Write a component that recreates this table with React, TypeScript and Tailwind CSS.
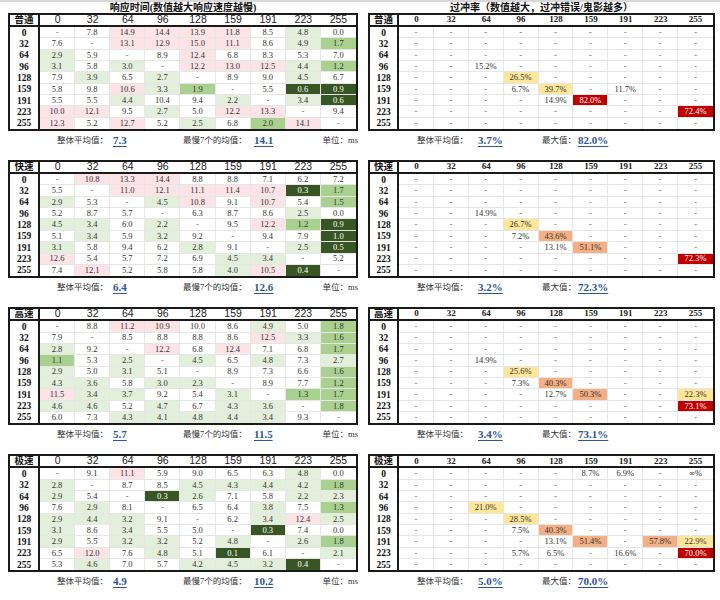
import React from 'react';

const labels = ['0', '32', '64', '96', '128', '159', '191', '223', '255'];
const dash = '- - - - - - - - -';

type Block = {
  name: string;
  title?: boolean;
  left: string[];
  right: string[];
  avg: string;
  slow: string;
  ravg: string;
  rmax: string;
};

const blocks: Block[] = [
  {
    name: '普通',
    title: true,
    left: [
      '- 7.8 14.9p 14.4p 13.9p 11.8p 8.5 4.8a 0.0',
      '7.6 - 13.1p 12.9p 15.0p 11.1p 8.6 4.9a 1.7b',
      '2.9a 5.9 - 8.9 12.4p 6.8 8.3 5.3 7.0',
      '3.1a 5.8 3.0a - 12.2p 13.0p 12.5p 4.4a 1.2b',
      '7.9 3.9a 6.5 2.7a - 8.9 9.0 4.5a 6.7',
      '5.8 9.8 10.6p 3.3a 1.9b - 5.5 0.6c 0.9c',
      '5.5 5.5 4.4a 10.4 9.4 2.2a - 3.4a 0.6c',
      '10.0p 12.1p 9.5 2.7a 5.0 12.2p 13.3p - 9.4',
      '12.3p 5.2 12.7p 5.2 2.5a 6.8 2.0b 14.1p -',
    ],
    right: [
      dash,
      dash,
      dash,
      '- - 15.2% - - - - - -',
      '- - - 26.5%y - - - - -',
      '- - - 6.7% 39.7%y - 11.7% - -',
      '- - - - 14.9% 82.0%r - - -',
      '- - - - - - - - 72.4%r',
      dash,
    ],
    avg: '7.3',
    slow: '14.1',
    ravg: '3.7%',
    rmax: '82.0%',
  },
  {
    name: '快速',
    left: [
      '- 10.8p 13.3p 14.4p 8.8 8.8 7.1 6.2 7.2',
      '5.5 - 11.0p 12.1p 11.1p 11.4p 10.7p 0.3c 1.7b',
      '2.9a 5.3 - 4.5a 10.8p 9.1 10.7p 5.4 1.5b',
      '5.2 8.7 5.7 - 6.3 8.7 8.6 2.5a 0.0',
      '4.5a 3.4a 6.0 2.2a - 9.5 12.2p 1.2b 0.9c',
      '5.1 3.4a 5.9 3.2a 9.2 - 9.4 7.9 1.0c',
      '3.1a 5.8 9.4 6.2 2.8a 9.1 - 2.5a 0.5c',
      '12.6p 5.4 5.7 7.2 6.9 4.5a 3.4a - 5.2',
      '7.4 12.1p 5.2 5.8 5.8 4.0a 10.5p 0.4c -',
    ],
    right: [
      dash,
      dash,
      dash,
      '- - 14.9% - - - - - -',
      '- - - 26.7%y - - - - -',
      '- - - 7.2% 43.6%o - - - -',
      '- - - - 13.1% 51.1%o - - -',
      '- - - - - - - - 72.3%r',
      dash,
    ],
    avg: '6.4',
    slow: '12.6',
    ravg: '3.2%',
    rmax: '72.3%',
  },
  {
    name: '高速',
    left: [
      '- 8.8 11.2p 10.9p 10.0 8.6 4.9a 5.0 1.8b',
      '7.9 - 8.5 8.8 8.8 8.6 12.5p 3.3a 1.6b',
      '2.8a 9.2 - 12.2p 6.8 12.4p 7.1 6.8 1.7b',
      '1.1b 5.3 2.5a - 4.5a 6.5 4.8a 7.3 2.7a',
      '2.9a 5.0 3.1a 5.1 - 8.9 7.3 6.6 1.6b',
      '4.3a 3.6a 5.8 3.0a 2.3a - 8.9 7.7 1.2b',
      '11.5p 3.4a 3.7a 9.2 5.4 3.1a - 1.3b 1.7b',
      '4.6a 4.6a 5.2 4.7a 6.7 4.3a 3.6a - 1.8b',
      '6.0 7.3 4.3a 4.1a 4.8a 4.4a 3.4a 9.3 -',
    ],
    right: [
      dash,
      dash,
      dash,
      '- - 14.9% - - - - - -',
      '- - - 25.6%y - - - - -',
      '- - - 7.3% 40.3%o - - - -',
      '- - - - 12.7% 50.3%o - - 22.3%y',
      '- - - - - - - - 73.1%r',
      dash,
    ],
    avg: '5.7',
    slow: '11.5',
    ravg: '3.4%',
    rmax: '73.1%',
  },
  {
    name: '极速',
    left: [
      '- 9.1 11.1p 5.9 9.0 6.5 6.3 4.8a 0.0',
      '2.8a - 8.7 8.5 4.5a 4.3a 4.4a 4.2a 1.8b',
      '2.9a 5.4 - 0.3c 2.6a 7.1 5.8 2.2a 2.3a',
      '7.6 2.9a 8.1 - 6.5 6.4 3.8a 7.5 1.3b',
      '2.9a 4.4a 3.2a 9.1 - 6.2 3.4a 12.4p 2.5a',
      '3.1a 8.6 3.4a 5.5 5.0 - 0.3c 7.4 0.0',
      '2.9a 5.5 3.2a 3.2a 5.2 4.8a - 2.6a 1.8b',
      '6.5 12.0p 7.6 4.8a 5.1 0.1c 6.1 - 2.1a',
      '5.3 4.6a 7.0 5.7 4.2a 4.5a 3.2a 0.4c -',
    ],
    right: [
      '- - - - - 8.7% 6.9% - ∞%',
      dash,
      dash,
      '- - 21.0%y - - - - - -',
      '- - - 28.5%y - - - - -',
      '- - - 7.5% 40.3%o - - - -',
      '- - - - 13.1% 51.4%o - 57.8%o 22.9%y',
      '- - - 5.7% 6.5% - 16.6% - 70.0%r',
      dash,
    ],
    avg: '4.9',
    slow: '10.2',
    ravg: '5.0%',
    rmax: '70.0%',
  },
];

const fills: Record<string, string> = {
  p: 'bg-[#fce4e6] text-[#333]',
  a: 'bg-[#e2efda] text-[#333]',
  b: 'bg-[#a9d08e] text-[#333]',
  c: 'bg-[#375623] text-white',
  y: 'bg-[#ffe699] text-[#333]',
  o: 'bg-[#f4b084] text-[#333]',
  r: 'bg-[#c00000] text-white',
};

const serif = 'font-["Liberation_Serif","Noto_Sans_CJK_SC",serif]';
const cjk = 'font-["Liberation_Serif","Noto_Sans_CJK_SC",sans-serif]';

function parse(s: string) {
  const m = s.match(/^(.*?)([pabcyor])?$/);
  return { text: m ? m[1] : s, code: m && m[2] ? m[2] : '' };
}

function Table({ name, rows, kind }: { name: string; rows: string[]; kind: 'left' | 'right' }) {
  const grid = kind === 'left' ? 'grid-cols-[30px_repeat(9,1fr)] w-[350px]' : 'grid-cols-[29px_repeat(9,1fr)] w-[347px]';
  const head =
    kind === 'left'
      ? 'font-["Liberation_Sans",sans-serif] text-[10.5px] text-[#222]'
      : `${serif} font-bold text-[9px] text-[#222]`;
  return (
    <div className={`grid ${grid} border-2 border-[#1a1a1a] bg-white`}>
      <div className={`h-[12px] flex items-center justify-center border-r-2 border-b-2 border-[#1a1a1a] ${cjk} font-bold text-[9.5px] text-[#111]`}>
        {name}
      </div>
      {labels.map((l) => (
        <div key={l} className={`h-[12px] flex items-center justify-center border-b-2 border-[#1a1a1a] ${head}`}>
          {l}
        </div>
      ))}
      {rows.map((row, ri) => {
        const cells = row.split(' ');
        const last = ri === rows.length - 1;
        return (
          <React.Fragment key={ri}>
            <div className={`h-[11.35px] flex items-center justify-center border-r-2 border-[#1a1a1a] ${serif} font-bold text-[9.5px] text-[#111]`}>
              {labels[ri]}
            </div>
            {cells.map((c, ci) => {
              const { text, code } = parse(c);
              const fill = code ? fills[code] : text === '-' ? 'text-[#666]' : 'text-[#333]';
              return (
                <div
                  key={ci}
                  className={`h-[11.35px] flex items-center justify-center ${ci < 8 ? 'border-r' : ''} ${last ? '' : 'border-b'} border-[#e6e6e6] ${serif} text-[8.5px] leading-none ${fill}`}
                >
                  {text}
                </div>
              );
            })}
          </React.Fragment>
        );
      })}
    </div>
  );
}

function Value({ v }: { v: string }) {
  return <span className={`${serif} font-bold text-[11px] text-[#2e5597] underline underline-offset-2`}>{v}</span>;
}

export default function App() {
  return (
    <div className="w-[720px] h-[600px] bg-white overflow-hidden">
      <div className="h-[2px] bg-[#d8d8d8]" />
      {blocks.map((b, bi) => (
        <div key={bi} className="flex gap-[10px] pl-[8px]">
          <div className="flex flex-col">
            <div className={`h-[11px] flex items-center justify-center ${cjk} font-bold text-[10px] text-[#111]`}>
              {b.title ? '响应时间(数值越大响应速度越慢)' : ''}
            </div>
            <Table name={b.name} rows={b.left} kind="left" />
            <div className={`h-[18px] flex items-center ${cjk} text-[8.5px] text-[#333]`}>
              <span className="ml-[49px] w-[56px]">整体平均值：</span>
              <span className="w-[70px]">
                <Value v={b.avg} />
              </span>
              <span className="w-[71px]">最慢7个的均值：</span>
              <Value v={b.slow} />
              <span className="ml-auto">单位：ms</span>
            </div>
          </div>
          <div className="flex flex-col">
            <div className={`h-[11px] flex items-center justify-center ${cjk} font-bold text-[10px] text-[#111]`}>
              {b.title ? '过冲率（数值越大，过冲错误/鬼影越多）' : ''}
            </div>
            <Table name={b.name} rows={b.right} kind="right" />
            <div className={`h-[18px] flex items-center ${cjk} text-[8.5px] text-[#333]`}>
              <span className="ml-[49px] w-[61px]">整体平均值：</span>
              <span className="w-[64px]">
                <Value v={b.ravg} />
              </span>
              <span className="w-[36px]">最大值：</span>
              <Value v={b.rmax} />
            </div>
          </div>
        </div>
      ))}
    </div>
  );
}
